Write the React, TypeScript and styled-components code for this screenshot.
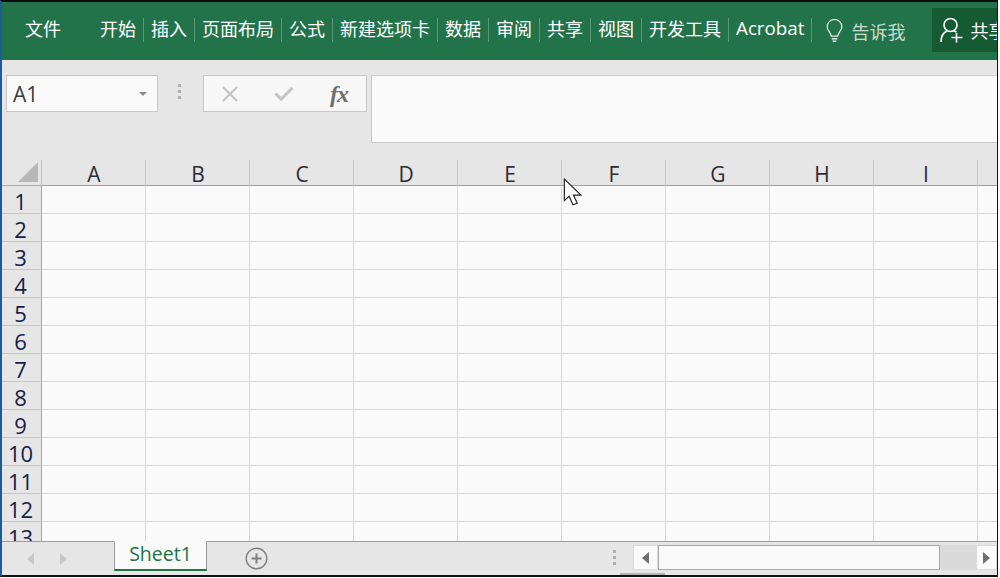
import React from "react";
import styled, { createGlobalStyle } from "styled-components";

const Global = createGlobalStyle`
  html, body { margin: 0; padding: 0; background: #fff; }
  body { width: 1000px; height: 578px; overflow: hidden; font-family: "Open Sans", "Noto Sans CJK SC", sans-serif; }
  #root { width: 1000px; height: 578px; }
`;

const Frame = styled.div`
  position: relative;
  box-sizing: border-box;
  width: 998px;
  height: 577px;
  border-top: 2px solid #0c0c0c;
  border-left: 2px solid #1d5c94;
  border-right: 1px solid #111;
  border-bottom: 2px solid #111;
  background: #e6e6e6;
  display: flex;
  flex-direction: column;
  overflow: hidden;
`;

const Ribbon = styled.div`
  flex: none;
  height: 58px;
  background: #23734a;
  display: flex;
  align-items: center;
  color: #fff;
  font: 18px/21px "Noto Sans CJK SC", "Noto Sans", sans-serif;
  padding-left: 23px;
`;
const FileTab = styled.div`
  width: 68px;
  flex: none;
  height: 24px;
  margin-top: -2px;
`;
const Tab = styled.div`
  flex: none;
  box-sizing: border-box;
  height: 24px;
  padding: 0 7px;
  margin-top: -2px;
  white-space: nowrap;
  border-right: 1px solid #5b9877;
`;
const LatinTab = styled(Tab)`
  font-family: "Open Sans", sans-serif;
  font-weight: 500;
  font-size: 18.8px;
  line-height: 20px;
`;
const TellMe = styled.div`
  flex: none;
  display: flex;
  align-items: center;
  margin-left: 13px;
  gap: 7px;
  color: #c6dccf;
`;
const Share = styled.div`
  flex: 1 0 auto;
  margin-left: 27px;
  margin-top: -2px;
  height: 44px;
  background: #155a33;
  display: flex;
  align-items: center;
  gap: 6px;
  padding-left: 8px;
  box-sizing: border-box;
  overflow: hidden;
  white-space: nowrap;
`;

const FormulaArea = styled.div`
  flex: none;
  height: 100px;
  display: flex;
  align-items: flex-start;
  padding: 15px 0 0 4px;
  box-sizing: border-box;
  background: #e6e6e6;
`;
const NameBox = styled.div`
  box-sizing: border-box;
  width: 152px;
  height: 37px;
  background: #fafafa;
  border: 1px solid #c8c8c8;
  display: flex;
  align-items: center;
  justify-content: space-between;
  padding: 0 10px 0 6px;
  font: 21px "Open Sans", sans-serif;
  color: #3a3a3a;
`;
const Caret = styled.span`
  width: 0;
  height: 0;
  border-left: 4px solid transparent;
  border-right: 4px solid transparent;
  border-top: 4px solid #8a8a8a;
`;
const Grip = styled.div<{ $w: number }>`
  flex: none;
  box-sizing: border-box;
  width: ${(p) => p.$w}px;
  display: flex;
  flex-direction: column;
  align-items: center;
  gap: 3px;
  padding: 9px 3px 0 0;
`;
const GripDot = styled.span`
  width: 3px;
  height: 3px;
  background: #b0b0b0;
`;
const ButtonBox = styled.div`
  box-sizing: border-box;
  width: 164px;
  height: 37px;
  background: #f7f7f7;
  border: 1px solid #c8c8c8;
  display: flex;
  align-items: center;
  padding-left: 18px;
  gap: 36px;
`;
const Fx = styled.i`
  font: italic bold 24px/30px "Liberation Serif", serif;
  color: #6e6e6e;
  letter-spacing: -1px;
`;
const Input = styled.div`
  flex: 1;
  margin-left: 4px;
  height: 68px;
  box-sizing: border-box;
  background: #fafafa;
  border: 1px solid #c8c8c8;
  border-right: none;
  border-top-color: #d0d0d0;
`;

const Sheet = styled.div`
  flex: 1;
  min-height: 0;
  overflow: hidden;
  display: grid;
  grid-template-columns: 40px repeat(10, 104px);
  grid-auto-rows: 28px;
  grid-template-rows: 26px;
  background: #fafafa;
`;
const Corner = styled.div`
  background: #e6e6e6;
  border-bottom: 1px solid #a6a6a6;
  border-right: 1px solid #c0c0c0;
  display: flex;
  align-items: flex-end;
  justify-content: flex-end;
  padding: 0 3px 3px 0;
  box-sizing: border-box;
`;
const ColHead = styled.div`
  box-sizing: border-box;
  background: #e6e6e6;
  border-bottom: 1px solid #a0a0a0;
  border-right: 1px solid #c6c6c6;
  display: flex;
  align-items: center;
  justify-content: center;
  font: 21px/24px "Open Sans", sans-serif;
  color: #2e2a33;
  padding: 2px 0 0 1px;
`;
const RowHead = styled.div`
  box-sizing: border-box;
  background: #e6e6e6;
  border-bottom: 1px solid #c6c6c6;
  border-right: 1px solid #a6a6a6;
  display: flex;
  align-items: center;
  justify-content: center;
  font: 22px/24px "Open Sans", sans-serif;
  color: #14204a;
  padding: 2px 2px 0 0;
`;
const Cell = styled.div`
  box-sizing: border-box;
  border-bottom: 1px solid #d8d8d8;
  border-right: 1px solid #d8d8d8;
`;

const Footer = styled.div`
  flex: none;
  height: 34px;
  box-sizing: border-box;
  border-top: 1px solid #9c9c9c;
  background: #e6e6e6;
  display: flex;
  align-items: stretch;
`;
const Nav = styled.div`
  flex: none;
  width: 112px;
  display: flex;
  align-items: center;
  padding-left: 25px;
  gap: 26px;
  box-sizing: border-box;
`;
const SheetTab = styled.div`
  flex: none;
  box-sizing: border-box;
  width: 93px;
  height: 30px;
  background: #fafafa;
  border-left: 1px solid #9c9c9c;
  border-right: 1px solid #9c9c9c;
  border-bottom: 2px solid #217346;
  margin-top: -1px;
  border-top: 1px solid #fafafa;
  color: #217346;
  font: 19.5px/23px "Open Sans", sans-serif;
  text-align: center;
`;
const AddSheet = styled.div`
  flex: none;
  margin-left: 38px;
  width: 23px;
  display: flex;
  align-items: center;
`;
const Spacer = styled.div`
  flex: 1;
`;
const FooterGrip = styled(Grip)`
  padding: 8px 0 0 0;
  margin-right: 16px;
`;
const ScrollBar = styled.div`
  flex: none;
  width: 364px;
  height: 25px;
  margin-top: 3px;
  display: flex;
  background: #dadada;
`;
const ScrollBtn = styled.div<{ $w: number }>`
  flex: none;
  width: ${(p) => p.$w}px;
  box-sizing: border-box;
  background: #fafafa;
  border: 1px solid #dcdcdc;
  display: flex;
  align-items: center;
  justify-content: center;
`;
const Thumb = styled.div`
  flex: none;
  width: 282px;
  box-sizing: border-box;
  background: #fafafa;
  border: 1px solid #a8a8a8;
`;
const Track = styled.div`
  flex: 1;
`;
const StatusSliver = styled.div`
  position: absolute;
  left: 618px;
  bottom: 0;
  width: 45px;
  height: 2px;
  background: #b4b4b4;
`;
const Pointer = styled.svg`
  position: absolute;
  left: 561px;
  top: 176px;
`;

const tabs = ["开始", "插入", "页面布局", "公式", "新建选项卡", "数据", "审阅", "共享", "视图", "开发工具"];
const cols = ["A", "B", "C", "D", "E", "F", "G", "H", "I", ""];
const rows = Array.from({ length: 13 }, (_, i) => i + 1);

const Tri = ({ dir, color, w = 6, h = 10 }: { dir: "l" | "r"; color: string; w?: number; h?: number }) => (
  <svg width={w} height={h} viewBox="0 0 6 10" preserveAspectRatio="none">
    <path d={dir === "l" ? "M6 0V10L0 5Z" : "M0 0V10L6 5Z"} fill={color} />
  </svg>
);

export default function App() {
  return (
    <>
      <Global />
      <Frame>
        <Ribbon>
          <FileTab>文件</FileTab>
          {tabs.map((t) => (
            <Tab key={t}>{t}</Tab>
          ))}
          <LatinTab>Acrobat</LatinTab>
          <TellMe>
            <svg width="19" height="24" viewBox="0 0 20 26" fill="none" stroke="#e4efe9" strokeWidth="1.3">
              <path d="M6.5 18.5C6 14.5 2 12.5 2 8.5a8 8 0 0 1 16 0c0 4-4 6-4.500 10Z" />
              <path d="M7 21.500h6M8 24h4" strokeWidth="1.6" />
            </svg>
            告诉我
          </TellMe>
          <Share>
            <svg width="24" height="26" viewBox="0 0 24 26" fill="none" stroke="#fff" strokeWidth="1.6">
              <circle cx="10.500" cy="8" r="6.500" />
              <path d="M1 25c0-6 2.500-9.500 6-11M14 14c1 .3 1.500.5 2.500 1M16.500 16v9.500M11.500 20.500h11" />
            </svg>
            共享
          </Share>
        </Ribbon>
        <FormulaArea>
          <NameBox>
            A1
            <Caret />
          </NameBox>
          <Grip $w={45}>
            <GripDot />
            <GripDot />
            <GripDot />
          </Grip>
          <ButtonBox>
            <svg width="16" height="16" viewBox="0 0 18 18" stroke="#c4c4c4" strokeWidth="2.4">
              <path d="M1 1l16 16M17 1L1 17" />
            </svg>
            <svg width="20" height="15" viewBox="0 0 20 16" fill="none" stroke="#c4c4c4" strokeWidth="3.2">
              <path d="M1 8l6 6L19 2" />
            </svg>
            <Fx>fx</Fx>
          </ButtonBox>
          <Input />
        </FormulaArea>
        <Sheet>
          <Corner>
            <svg width="20" height="20" viewBox="0 0 20 20">
              <path d="M20 0V20H0Z" fill="#b8b8b8" />
            </svg>
          </Corner>
          {cols.map((c, i) => (
            <ColHead key={i}>{c}</ColHead>
          ))}
          {rows.map((r) => (
            <React.Fragment key={r}>
              <RowHead>{r}</RowHead>
              {cols.map((_, i) => (
                <Cell key={i} />
              ))}
            </React.Fragment>
          ))}
        </Sheet>
        <Footer>
          <Nav>
            <Tri dir="l" color="#c8c8c8" w={7} h={12} />
            <Tri dir="r" color="#c8c8c8" w={7} h={12} />
          </Nav>
          <SheetTab>Sheet1</SheetTab>
          <AddSheet>
            <svg width="23" height="23" viewBox="0 0 23 23" fill="none" stroke="#808080">
              <circle cx="11.500" cy="11.500" r="10.300" strokeWidth="1.400" />
              <path d="M11.500 6.500v10M6.500 11.500h10" strokeWidth="2" />
            </svg>
          </AddSheet>
          <Spacer />
          <FooterGrip $w={6}>
            <GripDot />
            <GripDot />
            <GripDot />
          </FooterGrip>
          <ScrollBar>
            <ScrollBtn $w={25}>
              <Tri dir="l" color="#6e6e6e" w={7} h={12} />
            </ScrollBtn>
            <Thumb />
            <Track />
            <ScrollBtn $w={21}>
              <Tri dir="r" color="#6e6e6e" w={7} h={12} />
            </ScrollBtn>
          </ScrollBar>
        </Footer>
        <StatusSliver />
        <Pointer width="22" height="30" viewBox="0 0 20 28">
          <path d="M1 1V21L5.500 17L9 25L13 23.500L9.500 16H16.500Z" fill="#fff" stroke="#222" strokeWidth="1.1" />
        </Pointer>
      </Frame>
    </>
  );
}
